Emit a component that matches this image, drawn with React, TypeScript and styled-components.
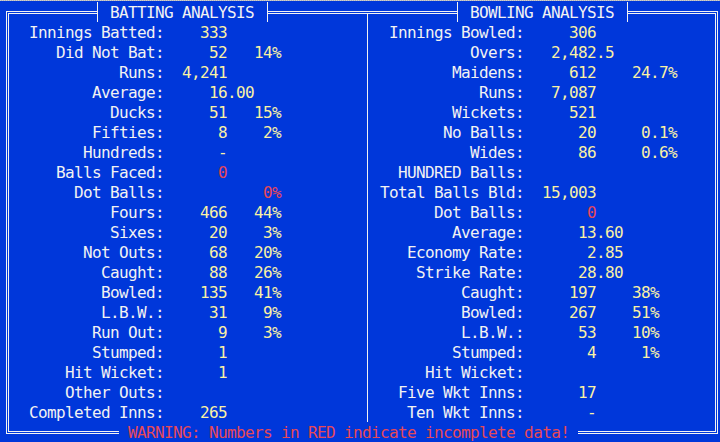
import React from "react";
import styled, { createGlobalStyle } from "styled-components";

const BLUE = "#0037DA";
const WHITE = "#F2F2F2";
const YELLOW = "#F9F1A5";
const RED = "#E74856";

const GlobalStyle = createGlobalStyle`
  html, body { margin: 0; padding: 0; background: ${BLUE}; }
  body { overflow: hidden; }
`;

const Screen = styled.div`
  width: 720px;
  height: 442px;
  overflow: hidden;
  background: ${BLUE};
  font-family: "DejaVu Sans Mono", "Liberation Mono", monospace;
  font-size: 16px;
  letter-spacing: -0.63px;
  color: ${WHITE};
`;

const TopEdge = styled.div`
  height: 1px;
  background: repeating-linear-gradient(90deg, #d0d0d0 0 1px, #b4b4b4 1px 2px);
`;

const Frame = styled.div`
  box-sizing: border-box;
  margin: 10px 0 0 6px;
  width: 712px;
  border: 3px double ${WHITE};
  display: flex;
  flex-direction: column;
`;

const TitleRow = styled.div`
  display: flex;
  height: 20px;
  margin: -12px 0 -8px 0;
  position: relative;
  z-index: 1;
`;

const Title = styled.div<{ $offset: number }>`
  box-sizing: border-box;
  width: 171px;
  height: 20px;
  margin-left: ${(p) => p.$offset}px;
  padding-left: 12px;
  background: ${BLUE};
  border-left: 1px solid ${WHITE};
  border-right: 1px solid ${WHITE};
  line-height: 21px;
  white-space: nowrap;
`;

const Body = styled.div`
  display: grid;
  grid-template-columns: 359px 1fr;
  height: 408px;
  box-sizing: border-box;
  padding-top: 8px;
`;

const Panel = styled.div<{ $divider?: boolean }>`
  box-sizing: border-box;
  margin-top: -8px;
  padding-top: 8px;
  border-right: ${(p) => (p.$divider ? `1px solid ${WHITE}` : "none")};
  display: flex;
  flex-direction: column;
`;

const Row = styled.div<{ $cols: string }>`
  display: grid;
  grid-template-columns: ${(p) => p.$cols};
  height: 20px;
  line-height: 21px;
  white-space: pre;
`;

const Label = styled.span`
  text-align: right;
  color: ${WHITE};
`;

const Value = styled.span<{ $red?: boolean }>`
  text-align: right;
  color: ${(p) => (p.$red ? RED : YELLOW)};
`;

const Frac = styled.span`
  text-align: left;
  color: ${YELLOW};
`;

const Pct = styled.span<{ $red?: boolean; $short?: boolean }>`
  text-align: right;
  padding-right: ${(p) => (p.$short ? 18 : 0)}px;
  color: ${(p) => (p.$red ? RED : YELLOW)};
`;

const Footer = styled.div`
  box-sizing: border-box;
  margin: 0 0 -11px 110px;
  width: 459px;
  height: 20px;
  padding: 0 9px;
  background: ${BLUE};
  color: ${RED};
  line-height: 21px;
  white-space: nowrap;
  position: relative;
`;

type Stat = {
  label: string;
  value?: string;
  frac?: string;
  pct?: string;
  redValue?: boolean;
  redPct?: boolean;
  shortPct?: boolean;
};

const batting: Stat[] = [
  { label: "Innings Batted:", value: "333" },
  { label: "Did Not Bat:", value: "52", pct: "14%" },
  { label: "Runs:", value: "4,241" },
  { label: "Average:", value: "16", frac: ".00" },
  { label: "Ducks:", value: "51", pct: "15%" },
  { label: "Fifties:", value: "8", pct: "2%" },
  { label: "Hundreds:", value: "-" },
  { label: "Balls Faced:", value: "0", redValue: true },
  { label: "Dot Balls:", pct: "0%", redPct: true },
  { label: "Fours:", value: "466", pct: "44%" },
  { label: "Sixes:", value: "20", pct: "3%" },
  { label: "Not Outs:", value: "68", pct: "20%" },
  { label: "Caught:", value: "88", pct: "26%" },
  { label: "Bowled:", value: "135", pct: "41%" },
  { label: "L.B.W.:", value: "31", pct: "9%" },
  { label: "Run Out:", value: "9", pct: "3%" },
  { label: "Stumped:", value: "1" },
  { label: "Hit Wicket:", value: "1" },
  { label: "Other Outs:" },
  { label: "Completed Inns:", value: "265" },
];

const bowling: Stat[] = [
  { label: "Innings Bowled:", value: "306" },
  { label: "Overs:", value: "2,482", frac: ".5" },
  { label: "Maidens:", value: "612", pct: "24.7%" },
  { label: "Runs:", value: "7,087" },
  { label: "Wickets:", value: "521" },
  { label: "No Balls:", value: "20", pct: "0.1%" },
  { label: "Wides:", value: "86", pct: "0.6%" },
  { label: "HUNDRED Balls:" },
  { label: "Total Balls Bld:", value: "15,003" },
  { label: "Dot Balls:", value: "0", redValue: true },
  { label: "Average:", value: "13", frac: ".60" },
  { label: "Economy Rate:", value: "2", frac: ".85" },
  { label: "Strike Rate:", value: "28", frac: ".80" },
  { label: "Caught:", value: "197", pct: "38%", shortPct: true },
  { label: "Bowled:", value: "267", pct: "51%", shortPct: true },
  { label: "L.B.W.:", value: "53", pct: "10%", shortPct: true },
  { label: "Stumped:", value: "4", pct: "1%", shortPct: true },
  { label: "Hit Wicket:" },
  { label: "Five Wkt Inns:", value: "17" },
  { label: "Ten Wkt Inns:", value: "-" },
];

const LEFT_COLS = "155px 63px 27px 27px";
const RIGHT_COLS = "156px 72px 27px 54px";

function StatList({ stats, cols }: { stats: Stat[]; cols: string }) {
  return (
    <>
      {stats.map((s) => (
        <Row key={s.label + (s.value ?? "")} $cols={cols}>
          <Label>{s.label}</Label>
          <Value $red={s.redValue}>{s.value ?? ""}</Value>
          <Frac>{s.frac ?? ""}</Frac>
          <Pct $red={s.redPct} $short={s.shortPct}>
            {s.pct ?? ""}
          </Pct>
        </Row>
      ))}
    </>
  );
}

export default function App() {
  return (
    <>
      <GlobalStyle />
      <Screen>
        <TopEdge />
        <Frame>
          <TitleRow>
            <Title $offset={88}>BATTING ANALYSIS</Title>
            <Title $offset={189}>BOWLING ANALYSIS</Title>
          </TitleRow>
          <Body>
            <Panel $divider>
              <StatList stats={batting} cols={LEFT_COLS} />
            </Panel>
            <Panel>
              <StatList stats={bowling} cols={RIGHT_COLS} />
            </Panel>
          </Body>
          <Footer>WARNING: Numbers in RED indicate incomplete data!</Footer>
        </Frame>
      </Screen>
    </>
  );
}
